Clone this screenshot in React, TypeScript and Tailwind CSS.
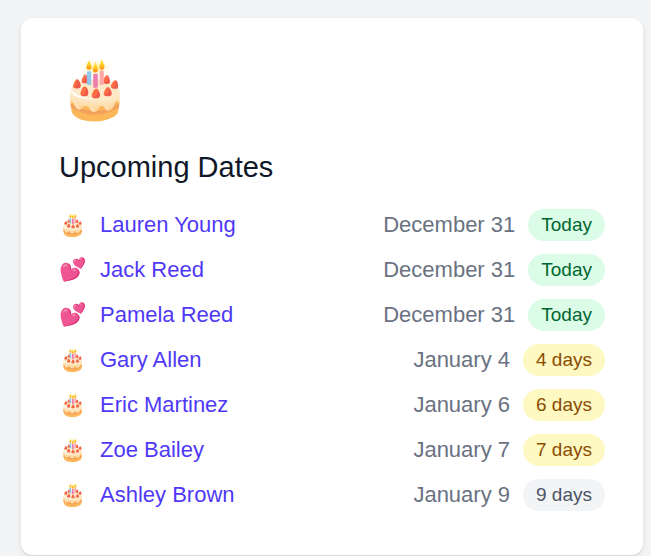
import React from 'react';

interface DateEntry {
  name: string;
  type: 'birthday' | 'anniversary';
  date: string;
  daysUntil: number;
}

const entries: DateEntry[] = [
  { name: 'Lauren Young', type: 'birthday', date: 'December 31', daysUntil: 0 },
  { name: 'Jack Reed', type: 'anniversary', date: 'December 31', daysUntil: 0 },
  { name: 'Pamela Reed', type: 'anniversary', date: 'December 31', daysUntil: 0 },
  { name: 'Gary Allen', type: 'birthday', date: 'January 4', daysUntil: 4 },
  { name: 'Eric Martinez', type: 'birthday', date: 'January 6', daysUntil: 6 },
  { name: 'Zoe Bailey', type: 'birthday', date: 'January 7', daysUntil: 7 },
  { name: 'Ashley Brown', type: 'birthday', date: 'January 9', daysUntil: 9 },
];

const badgeColor = (days: number) => {
  if (days === 0) return 'bg-green-100 text-green-800';
  if (days <= 7) return 'bg-yellow-100 text-yellow-800';
  return 'bg-gray-100 text-gray-600';
};

export default function App() {
  return (
    <div className="min-h-screen bg-gray-100 pt-[18px] pl-[21px] pr-2 font-['Liberation_Sans',Arial,sans-serif]">
      <section className="rounded-xl bg-white px-[38px] pt-[38px] pb-11 shadow-[0_2px_5px_rgb(0_0_0/0.1),0_2px_3px_-2px_rgb(0_0_0/0.1)]">
        <div className="text-[58px] leading-[64px]">🎂</div>

        <h2 className="mt-7 text-[29px] leading-[38px] text-gray-900">Upcoming Dates</h2>

        <ul className="mt-[23px] space-y-[13px]">
          {entries.map(entry => (
            <li key={entry.name} className="flex items-center justify-between">
              <div className="flex items-center gap-[14px]">
                <span className="text-[22px] leading-8">{entry.type === 'birthday' ? '🎂' : '💕'}</span>
                <a href="#" className="text-[22px] leading-8 text-indigo-600">{entry.name}</a>
              </div>
              <div className="flex items-center gap-[13px]">
                <span className="text-[22px] leading-8 text-gray-500">{entry.date}</span>
                <span className={`rounded-full px-[13px] py-[3px] text-[19px] leading-[26px] ${badgeColor(entry.daysUntil)}`}>
                  {entry.daysUntil === 0 ? 'Today' : `${entry.daysUntil} days`}
                </span>
              </div>
            </li>
          ))}
        </ul>
      </section>
    </div>
  );
}
